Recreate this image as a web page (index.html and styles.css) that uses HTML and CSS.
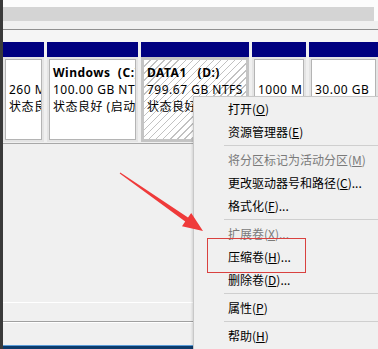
FILE: index.html
```html
<!DOCTYPE html>
<html lang="zh-CN">
<head>
<meta charset="utf-8">
<title>磁盘管理</title>
<link rel="stylesheet" href="styles.css">
</head>
<body>
<div class="window">
  <div class="top-white"></div>
  <div class="hscroll"><div class="hscroll-track"></div></div>
  <div class="band"></div>
  <div class="divider"></div>
  <div class="gap-area"></div>
  <div class="disk-row">
    <div class="part p1">
      <div class="part-head"></div>
      <div class="part-body"><div class="part-box">
        <div class="line"></div>
        <div class="line">260 MB</div>
        <div class="line">状态良好 (EFI 系统分区)</div>
      </div></div>
    </div>
    <div class="part p2">
      <div class="part-head"></div>
      <div class="part-body"><div class="part-box">
        <div class="line name">Windows  (C:)</div>
        <div class="line">100.00 GB NTFS</div>
        <div class="line">状态良好 (启动, 页面文件, 故障转储, 主分区)</div>
      </div></div>
    </div>
    <div class="part p3 sel">
      <div class="part-head"></div>
      <div class="part-body"><div class="part-box">
        <div class="line name">DATA1   (D:)</div>
        <div class="line">799.67 GB NTFS</div>
        <div class="line">状态良好 (主分区)</div>
      </div></div>
    </div>
    <div class="part p4">
      <div class="part-head"></div>
      <div class="part-body"><div class="part-box">
        <div class="line"></div>
        <div class="line">1000 MB</div>
        <div class="line">状态良好 (恢复分区)</div>
      </div></div>
    </div>
    <div class="part p5">
      <div class="part-head"></div>
      <div class="part-body"><div class="part-box">
        <div class="line"></div>
        <div class="line">30.00 GB</div>
        <div class="line">未分配</div>
      </div></div>
    </div>
  </div>
  <div class="row-space"></div>
  <div class="rule"></div>
  <div class="fill fill-a"></div>
  <div class="hl-white"></div>
  <div class="fill fill-b"></div>
  <div class="hl-gray"></div>
  <div class="hl-white"></div>
  <div class="fill"></div>
  <div class="hl-blue"></div>
  <div class="bottom-bar"></div>
</div>

<div class="menu">
  <div class="mi">打开(<u>O</u>)</div>
  <div class="mi">资源管理器(<u>E</u>)</div>
  <div class="sep"></div>
  <div class="mi dis">将分区标记为活动分区(<u>M</u>)</div>
  <div class="mi">更改驱动器号和路径(<u>C</u>)...</div>
  <div class="mi">格式化(<u>F</u>)...</div>
  <div class="sep"></div>
  <div class="mi dis">扩展卷(<u>X</u>)...</div>
  <div class="mi">压缩卷(<u>H</u>)...</div>
  <div class="mi">删除卷(<u>D</u>)...</div>
  <div class="sep"></div>
  <div class="mi">属性(<u>P</u>)</div>
  <div class="sep"></div>
  <div class="mi">帮助(<u>H</u>)</div>
</div>

<svg class="annot" width="378" height="349" viewBox="0 0 378 349" xmlns="http://www.w3.org/2000/svg">
  <polygon points="120.3,172.6 188.0,217.6 191.2,213.0 203,231 182.0,226.2 185.2,221.6 119.7,173.4" fill="#ef3a3a"/>
  <rect x="207.5" y="238.5" width="98" height="34" fill="none" stroke="#d9413f" stroke-width="1"/>
</svg>
</body>
</html>
```

FILE: styles.css
```css
html, body {
  margin: 0;
  padding: 0;
  width: 378px;
  height: 349px;
  overflow: hidden;
  background: #f0f0f0;
}

body {
  position: relative;
  font-family: "Noto Sans", "Noto Sans CJK SC", sans-serif;
  font-size: 12px;
  color: #000;
}

.window {
  display: flex;
  flex-direction: column;
  height: 349px;
  border-left: 3px solid #3a3a3a;
  box-sizing: border-box;
}

.top-white { height: 7px; background: #fcfcfc; flex: none; }
.hscroll { height: 14px; background: #fcfcfc; display: flex; flex: none; }
.hscroll-track { flex: 1; margin-right: 4px; background: #d4d4d4; }
.band { height: 8px; background: #f0f0f0; flex: none; }
.divider { height: 1px; background: #8f8f8f; flex: none; }
.gap-area { height: 12px; background: #f5f5f5; flex: none; }

.disk-row {
  height: 100px;
  flex: none;
  display: flex;
  gap: 3px;
  background: #f0f0f0;
}

.part {
  display: flex;
  flex-direction: column;
  flex: none;
}
.p1 { width: 41px; }
.p2 { width: 91px; }
.p3 { width: 108px; }
.p4 { width: 54px; }
.p5 { flex: 1; }

.part-head { height: 15px; background: #000080; flex: none; }

.part-body {
  flex: 1;
  padding: 2px;
  background: #e4e4e4;
  min-height: 0;
}

.part-box {
  height: 100%;
  box-sizing: border-box;
  border: 1px solid #b4b4b4;
  background: #fff;
  padding: 4px 3px;
  overflow: hidden;
  letter-spacing: 0.5px;
}

.part.sel .part-body {
  padding: 0;
  border: 3px solid #c4c4c4;
}
.part.sel .part-box {
  border: none;
  padding: 4px 3px;
  background: repeating-linear-gradient(135deg, #fff 0 4px, #c2c2c2 4px 5px);
}

.line {
  height: 17px;
  line-height: 17px;
  white-space: pre;
}
.line.name { font-weight: bold; }

.row-space { height: 1px; flex: none; }
.rule { height: 1px; background: #a8a8a8; flex: none; }
.fill { flex: 1; background: #f0f0f0; }
.fill-a { flex: none; height: 158px; }
.fill-b { flex: none; height: 18px; }
.hl-white { height: 1px; background: #fff; flex: none; }
.hl-gray { height: 1px; background: #a0a0a0; flex: none; }
.hl-blue { height: 1px; background: #5a9bd8; flex: none; }
.bottom-bar { height: 3px; background: #0c3b6b; flex: none; }

.menu {
  position: absolute;
  left: 193px;
  top: 96px;
  right: 0;
  bottom: 0;
  background: #f0f0f0;
  border-left: 1px solid #c8c8c8;
  border-top: 1px solid #c8c8c8;
  box-shadow: -1px 1px 2px rgba(0, 0, 0, 0.12);
  font-family: "Noto Sans CJK SC", sans-serif;
  font-size: 12px;
  overflow: hidden;
}

.mi {
  height: 23px;
  line-height: 23px;
  padding-left: 34px;
  white-space: nowrap;
  color: #000;
}
.mi.dis { color: #7a7a7a; }
.mi u { text-underline-offset: 1px; }

.sep {
  height: 5px;
  position: relative;
}
.sep::before {
  content: "";
  position: absolute;
  left: 30px;
  right: 0;
  top: 2px;
  height: 1px;
  background: #cfcfcf;
}

.annot {
  position: absolute;
  left: 0;
  top: 0;
  pointer-events: none;
}
```
